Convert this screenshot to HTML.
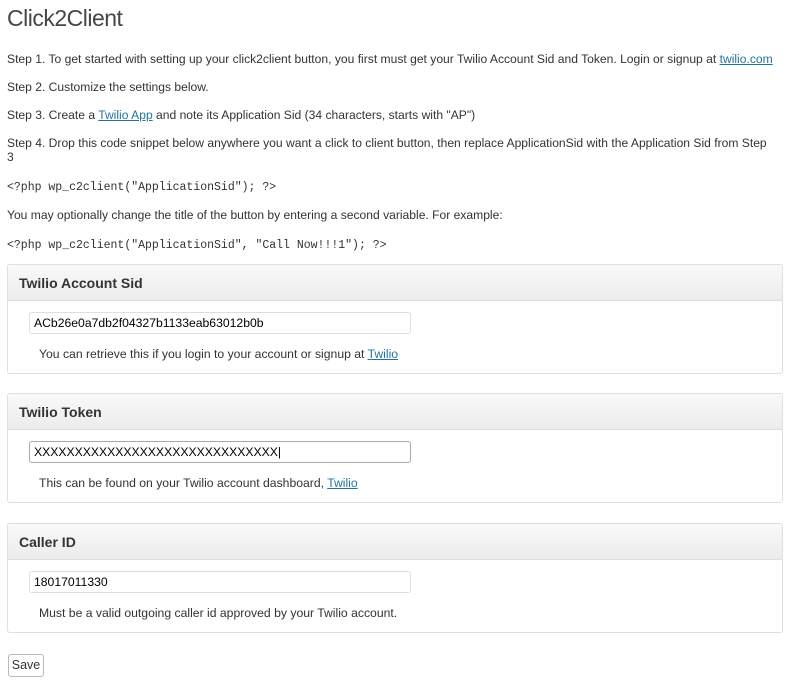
<!DOCTYPE html>
<html><head><style>
body{margin:0;background:#fff;font-family:"Liberation Sans",Arial,sans-serif;font-size:12.1px;color:#333;width:793px;height:685px;overflow:hidden;position:relative}
a{color:#21759b;text-decoration:underline}
.t{position:absolute;left:7px;white-space:nowrap}
h1{position:absolute;left:7px;top:5px;margin:0;font-weight:normal;font-size:23px;color:#464646;letter-spacing:-0.5px}
code{font-family:"Liberation Mono",monospace;font-size:11.5px;color:#333}
.p{position:absolute;left:7px;width:774px;border:1px solid #dfdfdf;border-radius:3px;background:#fff}
.h{height:35px;border-bottom:1px solid #dfdfdf;background:linear-gradient(#f9f9f9,#ececec);font-weight:bold;font-size:14px;line-height:37px;padding-left:11px;color:#333;border-radius:3px 3px 0 0}
.in{position:absolute;left:21px;top:47px;width:372px;height:20px;border:1px solid #dfdfdf;border-radius:3px;padding:0 4px;line-height:21px;font-size:12.2px;color:#000}
.hl{position:absolute;left:31px;top:82px;font-size:12.2px}
.btn{position:absolute;left:8px;top:654px;width:34px;height:21px;border:1px solid #bbb;border-radius:3px;text-align:center;line-height:21px;font-size:12.5px;color:#333;background:#fff}
</style></head><body>
<h1>Click2Client</h1>
<div class="t" style="top:52px">Step 1. To get started with setting up your click2client button, you first must get your Twilio Account Sid and Token. Login or signup at <a>twilio.com</a></div>
<div class="t" style="top:80px">Step 2. Customize the settings below.</div>
<div class="t" style="top:108px">Step 3. Create a <a>Twilio App</a> and note its Application Sid (34 characters, starts with "AP")</div>
<div class="t" style="top:136px">Step 4. Drop this code snippet below anywhere you want a click to client button, then replace ApplicationSid with the Application Sid from Step</div>
<div class="t" style="top:150px">3</div>
<div class="t" style="top:179px"><code>&lt;?php wp_c2client("ApplicationSid"); ?&gt;</code></div>
<div class="t" style="top:208px">You may optionally change the title of the button by entering a second variable. For example:</div>
<div class="t" style="top:237px"><code>&lt;?php wp_c2client("ApplicationSid", "Call Now!!!1"); ?&gt;</code></div>
<div class="p" style="top:264px;height:108px"><div class="h">Twilio Account Sid</div><div class="in">ACb26e0a7db2f04327b1133eab63012b0b</div><div class="hl">You can retrieve this if you login to your account or signup at <a>Twilio</a></div></div>
<div class="p" style="top:393px;height:108px"><div class="h">Twilio Token</div><div class="in" style="border-color:#aaa">XXXXXXXXXXXXXXXXXXXXXXXXXXXXXX|</div><div class="hl">This can be found on your Twilio account dashboard, <a>Twilio</a></div></div>
<div class="p" style="top:523px;height:108px"><div class="h">Caller ID</div><div class="in">18017011330</div><div class="hl">Must be a valid outgoing caller id approved by your Twilio account.</div></div>
<div class="btn">Save</div>
</body></html>
